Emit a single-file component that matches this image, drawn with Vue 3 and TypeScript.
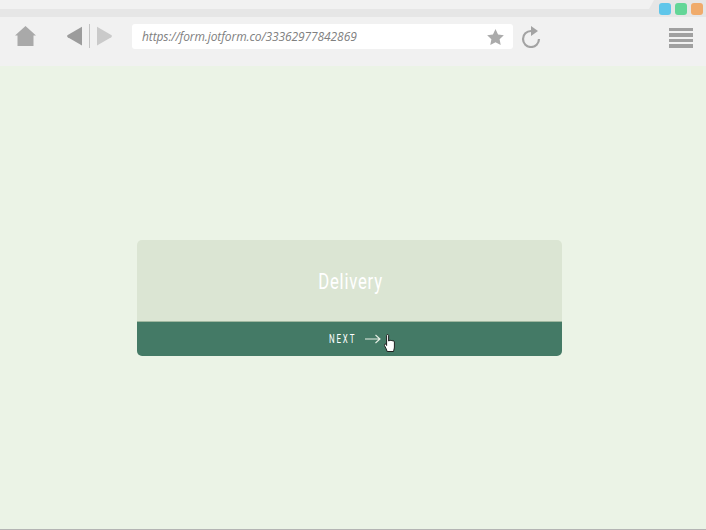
<script setup lang="ts">
const url = 'https://form.jotform.co/33362977842869'
const menuBars = [0, 1, 2, 3]
</script>

<template>
  <div class="window">
    <header class="chrome">
      <div class="tabstrip">
        <div class="tab"></div>
        <div class="lights">
          <span class="light blue"></span>
          <span class="light green"></span>
          <span class="light orange"></span>
        </div>
      </div>
      <div class="toolbar">
        <svg class="home" viewBox="0 0 21 20" aria-hidden="true">
          <path d="M10.500 0 21 9.500h-2.500V20h-16V9.500H0z" fill="#a9a9a9" />
        </svg>
        <div class="nav">
          <svg class="arrow" viewBox="0 0 16 20" aria-hidden="true">
            <path d="M16 0v20L.8 11.200a1.400 1.400 0 0 1 0-2.400z" fill="#9c9c9c" />
          </svg>
          <span class="divider"></span>
          <svg class="arrow" viewBox="0 0 16 20" aria-hidden="true">
            <path d="M0 0v20l15.200-8.800a1.400 1.400 0 0 0 0-2.400z" fill="#cacaca" />
          </svg>
        </div>
        <div class="address">
          <span class="url">{{ url }}</span>
          <svg class="star" viewBox="0 0 24 23" aria-hidden="true">
            <path d="M12 0l3.700 7.800 8.300 1.100-6.100 5.800 1.600 8.300L12 18.900 4.500 23l1.600-8.300L0 8.900l8.300-1.100z" fill="#ababab" />
          </svg>
        </div>
        <svg class="reload" viewBox="0 0 20 22" aria-hidden="true">
          <path d="M10 5a8 8 0 1 0 8 8" fill="none" stroke="#a3a3a3" stroke-width="2.200" />
          <path d="M10 0l7 5-7 5z" fill="#a3a3a3" />
        </svg>
        <div class="menu">
          <span v-for="bar in menuBars" :key="bar" class="menu-bar"></span>
        </div>
      </div>
    </header>
    <main class="page">
      <section class="card">
        <div class="card-body">
          <h1 class="title">Delivery</h1>
        </div>
        <div class="card-action">
          <span class="next">NEXT</span>
          <svg class="next-arrow" viewBox="0 0 16 10" aria-hidden="true">
            <path d="M0 5h15M10.500 1 15 5l-4.500 4" fill="none" stroke="#e8f0e6" stroke-width="1.100" />
          </svg>
          <svg class="hand" viewBox="0 0 11 18" aria-hidden="true">
            <path d="M2.600 1.500c0-1.300 2-1.300 2 0V7h.6c.2-1 1.700-1 1.900 0 .3-.8 1.600-.8 1.800.2.400-.5 1.500-.3 1.500.8v5c0 1.500-.6 2.500-.9 4.500H3.200C2.700 15.500 1.500 13.500.6 11.800c-.7-1.200.6-2.400 1.400-1.300l.6 1z" fill="#fff" stroke="#111" stroke-width=".9" stroke-linejoin="round" />
          </svg>
        </div>
      </section>
    </main>
  </div>
</template>

<style scoped>
.window {
  display: flex;
  flex-direction: column;
  height: 530px;
  width: 706px;
  overflow: hidden;
}
.chrome {
  background: #f1f1f1;
  flex: 0 0 66px;
}
.tabstrip {
  position: relative;
  height: 17px;
  background: #e6e6e6;
}
.tab {
  height: 9px;
  width: 654px;
  background: #f1f1f1;
  clip-path: polygon(0 0, 100% 0, 649px 100%, 0 100%);
}
.lights {
  position: absolute;
  top: 3px;
  right: 3px;
  display: flex;
  gap: 4px;
}
.light {
  width: 12px;
  height: 12px;
  border-radius: 3px;
}
.blue { background: #5fc6ea; }
.green { background: #63d697; }
.orange { background: #f0ab6b; }
.toolbar {
  display: flex;
  align-items: flex-start;
  height: 49px;
  padding: 7px 13px 0 15px;
  box-sizing: border-box;
}
.home {
  width: 21px;
  height: 20px;
  margin: 2px 30px 0 0;
}
.nav {
  display: flex;
  align-items: center;
  gap: 7px;
  height: 24px;
  margin: 0 20px 0 1px;
}
.arrow {
  width: 15px;
  height: 20px;
}
.divider {
  width: 1px;
  height: 24px;
  background: #c4c4c4;
}
.address {
  display: flex;
  align-items: center;
  justify-content: space-between;
  width: 381px;
  height: 25px;
  padding: 0 9px 0 10px;
  box-sizing: border-box;
  background: #fff;
  border-radius: 3px;
  margin-right: 8px;
}
.url {
  font: italic 12px "Open Sans", sans-serif;
  letter-spacing: -0.1px;
  color: #808080;
}
.star {
  width: 17px;
  height: 16px;
}
.reload {
  width: 20px;
  height: 22px;
  margin: 2px 128px 0 0;
}
.menu {
  display: flex;
  flex-direction: column;
  gap: 2px;
  width: 24px;
  margin-top: 3.5px;
}
.menu-bar {
  height: 3.5px;
  background: #a0a0a0;
}
.page {
  flex: 1;
  display: flex;
  align-items: center;
  justify-content: center;
  padding-right: 7px;
  background: #ebf3e6;
  border-bottom: 1px solid #b4b4b4;
}
.card {
  width: 425px;
  border-radius: 5px;
  overflow: hidden;
}
.card-body {
  display: flex;
  align-items: center;
  justify-content: center;
  height: 81px;
  padding: 2px 0 0 2px;
  box-sizing: border-box;
  background: #dbe5d3;
}
.title {
  margin: 0;
  font: 400 22px "Roboto", sans-serif;
  letter-spacing: 1px;
  color: #fff;
  transform: scaleX(0.76);
}
.card-action {
  position: relative;
  display: flex;
  align-items: center;
  justify-content: center;
  gap: 9px;
  height: 35px;
  padding-left: 4px;
  box-sizing: border-box;
  background: #447a66;
  border-top: 1px solid #a0b8a0;
}
.next {
  font: 400 12px "Roboto", sans-serif;
  letter-spacing: 2.800px;
  color: #fff;
  margin-right: -8px;
  transform: scaleX(0.66);
}
.next-arrow {
  width: 16px;
  height: 10px;
}
.hand {
  position: absolute;
  left: 246.500px;
  top: 12px;
  width: 11px;
  height: 18px;
}
</style>

<style>
html, body { margin: 0; background: #ebf3e6; }
</style>
